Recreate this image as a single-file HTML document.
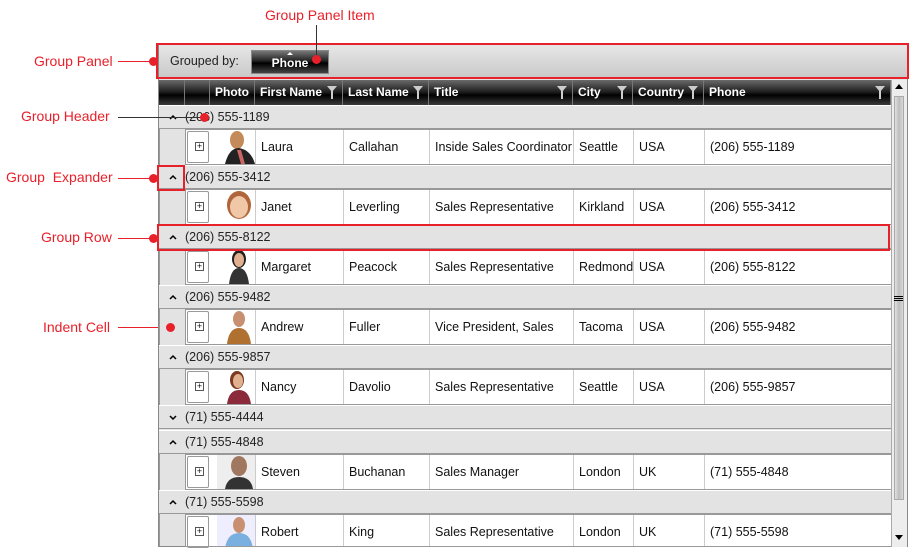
<!DOCTYPE html>
<html><head><meta charset="utf-8"><style>
*{margin:0;padding:0;box-sizing:border-box}
body{width:918px;height:556px;background:#fff;position:relative;overflow:hidden;font-family:"Liberation Sans","DejaVu Sans",sans-serif;font-size:12px;color:#111}
.a{position:absolute}
.lbl{position:absolute;color:#e8202a;font-size:14px;white-space:nowrap;line-height:16px}
.ln{position:absolute;height:1px;background:#e8202a}
.dot{position:absolute;width:9px;height:9px;border-radius:50%;background:#e8202a}
.rb{position:absolute;border:2px solid #e8202a}
.gh{position:absolute;left:159px;width:732px;height:24px;background:#e3e3e3;border-top:1px solid #fff;border-bottom:1px solid #999;line-height:22px;font-size:12.5px;color:#222}
.gh .ex{position:absolute;left:10px;top:8px;width:8px;height:6px}
.gh .t{position:absolute;left:26px}
.dr{position:absolute;left:185px;width:706px;height:36px;background:#fff;border-top:1px solid #999;border-bottom:1px solid #999;border-left:1px solid #999}
.dr div{position:absolute;top:0;height:100%;line-height:34px;border-right:1px solid #ccc;padding-left:5px;white-space:nowrap;overflow:hidden;font-size:12.5px}
.ind{position:absolute;left:159px;width:26px;background:#e3e3e3;border-left:1px solid #999}
.hd{position:absolute;top:80px;height:25px;background:linear-gradient(#6a6a6a,#1a1a1a 50%,#000 60%,#3a3a3a);color:#fff;font-weight:bold;line-height:24px;padding-left:5px;border-right:1px solid #777;font-size:12px;white-space:nowrap}
.fl{position:absolute;right:5px;top:6px;width:0;height:0;border-left:5px solid transparent;border-right:5px solid transparent;border-top:6px solid #ccc}
.fl:after{content:"";position:absolute;left:-1px;top:-1px;width:2px;height:8px;background:#ccc}
.dr div.bx{left:1px!important;top:1px!important;width:22px;height:32px!important;border:1px solid #999!important;border-radius:2px;padding:0!important}
.dr div.pl{width:9px;height:9px!important;border:1px solid #555!important;left:9px!important;top:12px!important;padding:0!important;line-height:6px!important;font-size:9px!important;text-align:center}
.ph{position:absolute;left:26px;top:0;width:44px;height:34px;border-right:1px solid #ccc;overflow:hidden;background:#fff}
</style></head><body>

<div class="lbl" style="left:265px;top:7px">Group Panel Item</div>
<div class="lbl" style="left:34px;top:53px">Group Panel</div>
<div class="ln" style="left:118px;top:61px;width:34px"></div>
<div class="lbl" style="left:21px;top:108px">Group Header</div>
<div class="lbl" style="left:6px;top:169px">Group&nbsp; Expander</div>
<div class="ln" style="left:118px;top:178px;width:34px"></div>
<div class="lbl" style="left:41px;top:229px">Group Row</div>
<div class="ln" style="left:118px;top:238px;width:34px"></div>
<div class="lbl" style="left:43px;top:319px">Indent Cell</div>
<div class="ln" style="left:118px;top:327px;width:50px"></div>

<div class="a" style="left:158px;top:44px;width:750px;height:503px;border:1px solid #888;background:#e3e3e3"></div>
<div class="a" style="left:159px;top:46px;width:748px;height:32px;background:linear-gradient(#e6e6e6,#c9c9c9);border-bottom:1px solid #eee"></div>
<div class="a" style="left:170px;top:54px;font-size:12.5px;color:#222">Grouped by:</div>
<div class="a" style="left:251px;top:50px;width:78px;height:24px;background:linear-gradient(#777,#222 45%,#000 55%,#444);border:1px solid #888;color:#fff;text-align:center;line-height:24px;font-weight:bold;font-size:12px">Phone</div>
<div class="a" style="left:287px;top:52px;width:0;height:0;border-left:3px solid transparent;border-right:3px solid transparent;border-bottom:3px solid #fff"></div>

<div class="hd" style="left:159px;width:26px;padding:0"></div>
<div class="hd" style="left:185px;width:25px;padding:0"></div>
<div class="hd" style="left:210px;width:45px">Photo</div>
<div class="hd" style="left:255px;width:88px">First Name<span class="fl"></span></div>
<div class="hd" style="left:343px;width:86px">Last Name<span class="fl"></span></div>
<div class="hd" style="left:429px;width:144px">Title<span class="fl"></span></div>
<div class="hd" style="left:573px;width:60px">City<span class="fl"></span></div>
<div class="hd" style="left:633px;width:71px">Country<span class="fl"></span></div>
<div class="hd" style="left:704px;width:187px">Phone<span class="fl"></span></div>

<div class="a" style="left:891px;top:80px;width:16px;height:467px;background:#ededed;border-left:1px solid #aaa"></div>
<div class="a" style="left:894px;top:96px;width:10px;height:404px;background:linear-gradient(90deg,#e0e0e0,#bdbdbd 50%,#d8d8d8);border:1px solid #aaa"></div>
<div class="a" style="left:895px;top:84px;border-left:4px solid transparent;border-right:4px solid transparent;border-bottom:5px solid #000"></div>
<div class="a" style="left:895px;top:535px;border-left:4px solid transparent;border-right:4px solid transparent;border-top:5px solid #000"></div>
<div class="a" style="left:894px;top:296px;width:9px;height:5px;border-top:1px solid #000;border-bottom:1px solid #000"></div>
<div class="a" style="left:894px;top:298px;width:9px;height:1px;background:#000"></div>

<div class="ind" style="top:105px;height:60px"></div>
<div class="gh" style="top:105px"><svg class="ex"><path d="M1 5 L4 2 L7 5" stroke="#000" stroke-width="1.5" fill="none"/></svg><span class="t">(206) 555-1189</span></div>
<div class="dr" style="top:129px"><div class="bx"></div><div class="pl">+</div><div class="ph"><svg width="44" height="34"><ellipse cx="20" cy="10" rx="7" ry="9" fill="#c58a5a"/><path d="M8 34 Q12 18 22 18 Q34 20 38 34Z" fill="#222"/><path d="M20 20 L24 34 L28 34 L24 20Z" fill="#c66"/></svg></div><div style="left:70px;width:88px">Laura</div><div style="left:158px;width:86px">Callahan</div><div style="left:244px;width:144px">Inside Sales Coordinator</div><div style="left:388px;width:60px">Seattle</div><div style="left:448px;width:71px">USA</div><div style="left:519px;width:187px;border:0">(206) 555-1189</div></div>

<div class="ind" style="top:165px;height:60px"></div>
<div class="gh" style="top:165px"><svg class="ex"><path d="M1 5 L4 2 L7 5" stroke="#000" stroke-width="1.5" fill="none"/></svg><span class="t">(206) 555-3412</span></div>
<div class="dr" style="top:189px"><div class="bx"></div><div class="pl">+</div><div class="ph"><svg width="44" height="34"><ellipse cx="22" cy="15" rx="12" ry="14" fill="#b0663a"/><ellipse cx="22" cy="17" rx="9" ry="11" fill="#f0c8a8"/></svg></div><div style="left:70px;width:88px">Janet</div><div style="left:158px;width:86px">Leverling</div><div style="left:244px;width:144px">Sales Representative</div><div style="left:388px;width:60px">Kirkland</div><div style="left:448px;width:71px">USA</div><div style="left:519px;width:187px;border:0">(206) 555-3412</div></div>

<div class="ind" style="top:225px;height:60px"></div>
<div class="gh" style="top:225px"><svg class="ex"><path d="M1 5 L4 2 L7 5" stroke="#000" stroke-width="1.5" fill="none"/></svg><span class="t">(206) 555-8122</span></div>
<div class="dr" style="top:249px"><div class="bx"></div><div class="pl">+</div><div class="ph"><svg width="44" height="34"><ellipse cx="22" cy="9" rx="7" ry="9" fill="#222"/><ellipse cx="22" cy="10" rx="5" ry="7" fill="#e0b090"/><path d="M12 34 Q14 18 22 18 Q30 18 32 34Z" fill="#333"/></svg></div><div style="left:70px;width:88px">Margaret</div><div style="left:158px;width:86px">Peacock</div><div style="left:244px;width:144px">Sales Representative</div><div style="left:388px;width:60px">Redmond</div><div style="left:448px;width:71px">USA</div><div style="left:519px;width:187px;border:0">(206) 555-8122</div></div>

<div class="ind" style="top:285px;height:60px"></div>
<div class="gh" style="top:285px"><svg class="ex"><path d="M1 5 L4 2 L7 5" stroke="#000" stroke-width="1.5" fill="none"/></svg><span class="t">(206) 555-9482</span></div>
<div class="dr" style="top:309px"><div class="bx"></div><div class="pl">+</div><div class="ph"><svg width="44" height="34"><ellipse cx="22" cy="9" rx="6" ry="8" fill="#c89070"/><path d="M10 34 Q12 18 22 18 Q32 18 34 34Z" fill="#b07030"/></svg></div><div style="left:70px;width:88px">Andrew</div><div style="left:158px;width:86px">Fuller</div><div style="left:244px;width:144px">Vice President, Sales</div><div style="left:388px;width:60px">Tacoma</div><div style="left:448px;width:71px">USA</div><div style="left:519px;width:187px;border:0">(206) 555-9482</div></div>

<div class="ind" style="top:345px;height:60px"></div>
<div class="gh" style="top:345px"><svg class="ex"><path d="M1 5 L4 2 L7 5" stroke="#000" stroke-width="1.5" fill="none"/></svg><span class="t">(206) 555-9857</span></div>
<div class="dr" style="top:369px"><div class="bx"></div><div class="pl">+</div><div class="ph"><svg width="44" height="34"><ellipse cx="20" cy="10" rx="7" ry="9" fill="#7a3a22"/><ellipse cx="21" cy="11" rx="5" ry="7" fill="#e0b090"/><path d="M10 34 Q12 20 22 20 Q32 20 34 34Z" fill="#8a2a3a"/></svg></div><div style="left:70px;width:88px">Nancy</div><div style="left:158px;width:86px">Davolio</div><div style="left:244px;width:144px">Sales Representative</div><div style="left:388px;width:60px">Seattle</div><div style="left:448px;width:71px">USA</div><div style="left:519px;width:187px;border:0">(206) 555-9857</div></div>

<div class="gh" style="top:405px"><svg class="ex"><path d="M1 2 L4 5 L7 2" stroke="#000" stroke-width="1.5" fill="none"/></svg><span class="t">(71) 555-4444</span></div>

<div class="ind" style="top:430px;height:60px"></div>
<div class="gh" style="top:430px"><svg class="ex"><path d="M1 5 L4 2 L7 5" stroke="#000" stroke-width="1.5" fill="none"/></svg><span class="t">(71) 555-4848</span></div>
<div class="dr" style="top:454px"><div class="bx"></div><div class="pl">+</div><div class="ph"><svg width="44" height="34"><rect width="44" height="34" fill="#eee"/><ellipse cx="22" cy="11" rx="8" ry="10" fill="#a07860"/><path d="M8 34 Q10 22 22 22 Q34 22 36 34Z" fill="#333"/></svg></div><div style="left:70px;width:88px">Steven</div><div style="left:158px;width:86px">Buchanan</div><div style="left:244px;width:144px">Sales Manager</div><div style="left:388px;width:60px">London</div><div style="left:448px;width:71px">UK</div><div style="left:519px;width:187px;border:0">(71) 555-4848</div></div>

<div class="ind" style="top:490px;height:56px"></div>
<div class="gh" style="top:490px"><svg class="ex"><path d="M1 5 L4 2 L7 5" stroke="#000" stroke-width="1.5" fill="none"/></svg><span class="t">(71) 555-5598</span></div>
<div class="dr" style="top:514px;height:33px"><div class="bx"></div><div class="pl">+</div><div class="ph"><svg width="44" height="34"><rect width="44" height="34" fill="#eef"/><ellipse cx="22" cy="10" rx="6" ry="8" fill="#c89070"/><path d="M8 34 Q10 18 22 18 Q34 18 36 34Z" fill="#7ab0e0"/></svg></div><div style="left:70px;width:88px">Robert</div><div style="left:158px;width:86px">King</div><div style="left:244px;width:144px">Sales Representative</div><div style="left:388px;width:60px">London</div><div style="left:448px;width:71px">UK</div><div style="left:519px;width:187px;border:0">(71) 555-5598</div></div>

<div class="rb" style="left:156px;top:43px;width:753px;height:36px"></div>
<div class="rb" style="left:157px;top:165px;width:28px;height:26px"></div>
<div class="rb" style="left:157px;top:224px;width:733px;height:27px"></div>
<div class="a" style="left:316px;top:25px;width:1px;height:34px;background:#333"></div>
<div class="ln" style="left:118px;top:117px;width:86px;background:#333"></div>
<div class="dot" style="left:312px;top:55px"></div>
<div class="dot" style="left:149px;top:57px"></div>
<div class="dot" style="left:200px;top:113px"></div>
<div class="dot" style="left:149px;top:174px"></div>
<div class="dot" style="left:149px;top:234px"></div>
<div class="dot" style="left:166px;top:323px"></div>
</body></html>
